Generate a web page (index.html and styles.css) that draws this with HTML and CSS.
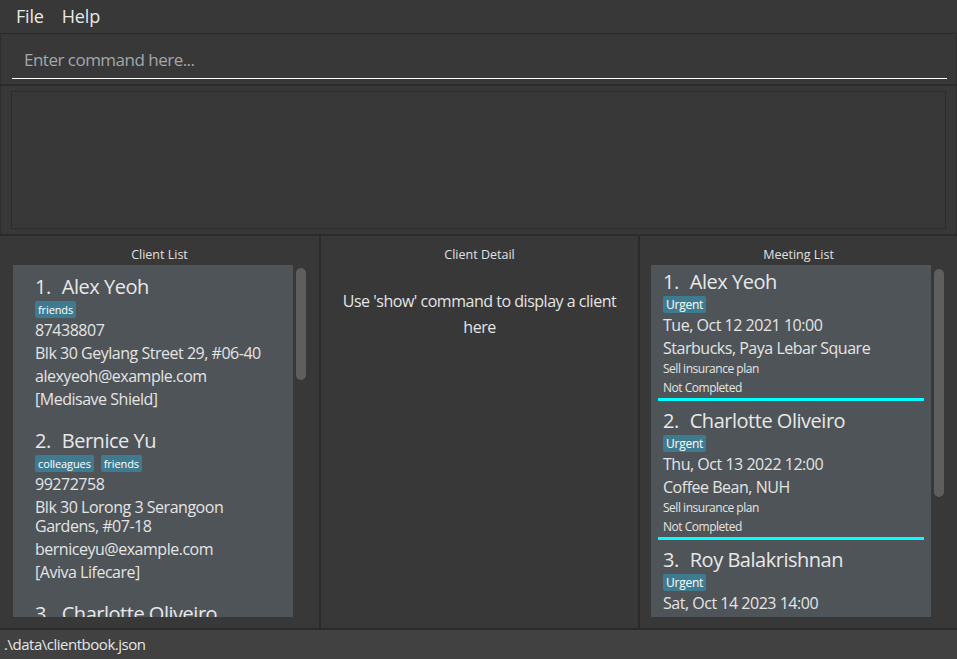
FILE: index.html
```html
<!DOCTYPE html>
<html lang="en">
<head>
<meta charset="utf-8">
<title>ClientBook</title>
<link rel="stylesheet" href="styles.css">
</head>
<body>
<div class="app">
  <nav class="menubar">
    <span class="menu">File</span>
    <span class="menu">Help</span>
  </nav>

  <section class="command-pane">
    <input class="command-input" type="text" placeholder="Enter command here...">
  </section>

  <section class="result-pane">
    <div class="result-box"></div>
  </section>

  <main class="split">
    <section class="panel panel-clients">
      <h2 class="panel-title">Client List</h2>
      <div class="list-view">
        <ul class="cells">
          <li class="client-card">
            <div class="card-name"><span class="idx">1.</span>Alex Yeoh</div>
            <div class="tags"><span class="tag">friends</span></div>
            <div class="field">87438807</div>
            <div class="field">Blk 30 Geylang Street 29, #06-40</div>
            <div class="field">alexyeoh@example.com</div>
            <div class="field">[Medisave Shield]</div>
          </li>
          <li class="client-card">
            <div class="card-name"><span class="idx">2.</span>Bernice Yu</div>
            <div class="tags"><span class="tag">colleagues</span><span class="tag">friends</span></div>
            <div class="field">99272758</div>
            <div class="field">Blk 30 Lorong 3 Serangoon Gardens, #07-18</div>
            <div class="field">berniceyu@example.com</div>
            <div class="field">[Aviva Lifecare]</div>
          </li>
          <li class="client-card">
            <div class="card-name"><span class="idx">3.</span>Charlotte Oliveiro</div>
          </li>
        </ul>
        <div class="scrollbar"><div class="thumb thumb-clients"></div></div>
      </div>
    </section>

    <section class="panel panel-detail">
      <h2 class="panel-title">Client Detail</h2>
      <p class="detail-hint">Use 'show' command to display a client here</p>
    </section>

    <section class="panel panel-meetings">
      <h2 class="panel-title">Meeting List</h2>
      <div class="list-view">
        <ul class="cells">
          <li class="meeting-card">
            <div class="meeting-body">
              <div class="card-name"><span class="idx">1.</span>Alex Yeoh</div>
              <div class="tags"><span class="tag tag-urgent">Urgent</span></div>
              <div class="field">Tue, Oct 12 2021 10:00</div>
              <div class="field">Starbucks, Paya Lebar Square</div>
              <div class="small">Sell insurance plan</div>
              <div class="small">Not Completed</div>
            </div>
            <div class="rule"></div>
          </li>
          <li class="meeting-card">
            <div class="meeting-body">
              <div class="card-name"><span class="idx">2.</span>Charlotte Oliveiro</div>
              <div class="tags"><span class="tag tag-urgent">Urgent</span></div>
              <div class="field">Thu, Oct 13 2022 12:00</div>
              <div class="field">Coffee Bean, NUH</div>
              <div class="small">Sell insurance plan</div>
              <div class="small">Not Completed</div>
            </div>
            <div class="rule"></div>
          </li>
          <li class="meeting-card">
            <div class="meeting-body">
              <div class="card-name"><span class="idx">3.</span>Roy Balakrishnan</div>
              <div class="tags"><span class="tag tag-urgent">Urgent</span></div>
              <div class="field">Sat, Oct 14 2023 14:00</div>
            </div>
          </li>
        </ul>
        <div class="scrollbar"><div class="thumb thumb-meetings"></div></div>
      </div>
    </section>
  </main>

  <footer class="status">.\data\clientbook.json</footer>
</div>
</body>
</html>
```

FILE: styles.css
```css
* { box-sizing: border-box; }

html, body {
  margin: 0;
  padding: 0;
  height: 659px;
  overflow: hidden;
  background: #2b2b2b;
  font-family: "Open Sans", "Noto Sans", sans-serif;
  letter-spacing: -0.03em;
  color: #e6e6e6;
}

.app {
  display: flex;
  flex-direction: column;
  height: 659px;
}

/* menu bar */
.menubar {
  flex: none;
  height: 34px;
  background: #383838;
  border-bottom: 1px solid #2b2b2b;
  display: flex;
  align-items: center;
  padding-left: 9px;
}
.menu {
  font-size: 18px;
  line-height: 24px;
  padding: 0 7px;
  margin-right: 4px;
  color: #e8e8e8;
  margin-top: -1px;
  letter-spacing: -0.01em;
}

/* command box */
.command-pane {
  flex: none;
  height: 50px;
  background: #383838;
  border-left: 1px solid #2e2e2e;
  border-right: 1px solid #2e2e2e;
  padding: 6px 9px 0 11px;
}
.command-input {
  display: block;
  width: 100%;
  height: 39px;
  border: none;
  border-bottom: 1px solid #ffffff;
  background: transparent;
  padding: 0 12px;
  font-family: inherit;
  font-size: 17px;
  letter-spacing: -0.03em;
  color: #e6e6e6;
  outline: none;
}
.command-input::placeholder {
  color: #a3a7ab;
}

/* result display */
.result-pane {
  flex: none;
  height: 148px;
  margin-top: 2px;
  background: #383838;
  border-left: 1px solid #2e2e2e;
  border-right: 1px solid #2e2e2e;
  padding: 5px 10px 5px 10px;
}
.result-box {
  height: 100%;
  border: 1px solid #2c2c2c;
  background: #383838;
}

/* split area */
.split {
  flex: none;
  height: 392px;
  margin-top: 2px;
  display: grid;
  grid-template-columns: 319px 317px 317px;
  column-gap: 2px;
}
.panel {
  background: #383838;
  padding-top: 10px;
  min-width: 0;
  overflow: hidden;
}
.panel-clients { padding-left: 13px; }
.panel-meetings { padding-left: 11px; }

.panel-title {
  margin: 0 0 1px;
  font-size: 12.5px;
  font-weight: normal;
  line-height: 18px;
  letter-spacing: 0;
  text-align: center;
  color: #e0e0e0;
}
.panel-clients .panel-title { padding-right: 13px; }
.panel-meetings .panel-title { padding-right: 11px; }

.list-view {
  display: flex;
  height: 352px;
}
.cells {
  list-style: none;
  margin: 0;
  padding: 0;
  width: 280px;
  flex: none;
  height: 352px;
  overflow: hidden;
  background: #4f5458;
}
.scrollbar {
  flex: none;
  width: 10px;
  margin-left: 3px;
  position: relative;
}
.thumb {
  position: absolute;
  left: 0;
  width: 10px;
  border-radius: 5px;
  background: #5e5e5e;
}
.thumb-clients { top: 3px; height: 112px; }
.thumb-meetings { top: 4px; height: 228px; }

/* cards */
.card-name {
  font-size: 20px;
  line-height: 26px;
  color: #e8e8e8;
  white-space: nowrap;
}
.idx { margin-right: 11px; }

.tags {
  display: flex;
  gap: 7px;
  margin-top: 1px;
  height: 17px;
}
.tag {
  display: inline-block;
  height: 17px;
  line-height: 17px;
  padding: 0 3px;
  border-radius: 2px;
  background: #3e7b91;
  color: #ffffff;
  font-size: 11px;
  letter-spacing: -0.01em;
}
.tag-urgent { font-size: 12px; padding: 0 3px; letter-spacing: -0.02em; }

.field {
  font-size: 16px;
  line-height: 19px;
  padding: 3px 0 1px;
  color: #e4e4e4;
}
.small {
  font-size: 12px;
  line-height: 18px;
  padding-top: 1px;
  color: #e4e4e4;
}

.client-card {
  padding: 9px 15px 9px 22px;
}

.meeting-card {
  padding: 4px 7px 3px;
}
.meeting-body {
  padding-left: 5px;
}
.rule {
  margin-top: 1px;
  height: 3px;
  background: #00ffff;
}

/* client detail */
.detail-hint {
  margin: 24px 0 0;
  padding: 0 12px;
  font-size: 16px;
  line-height: 26px;
  text-align: center;
  color: #e4e4e4;
}

/* status bar */
.status {
  flex: none;
  height: 29px;
  margin-top: 2px;
  background: #414141;
  padding-left: 4px;
  font-size: 15px;
  line-height: 28px;
  color: #e6e6e6;
}
```
